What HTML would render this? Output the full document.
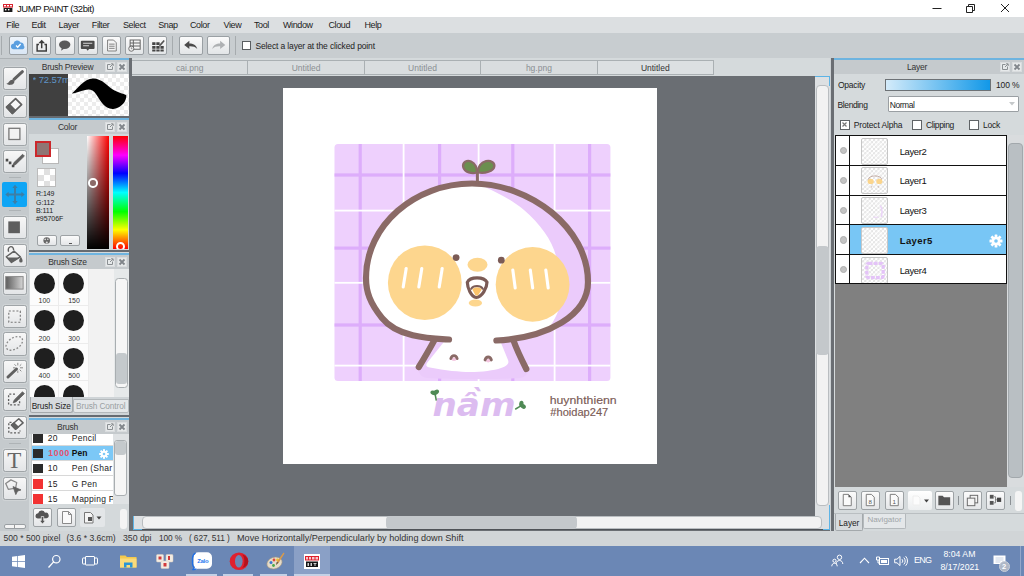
<!DOCTYPE html>
<html lang="en">
<head>
<meta charset="utf-8">
<title>JUMP PAINT (32bit)</title>
<style>
*{box-sizing:border-box;margin:0;padding:0}
html,body{width:1024px;height:576px;overflow:hidden;background:#c8cdd0;font-family:"Liberation Sans",sans-serif;font-size:9px;color:#2a2d30}
.a{position:absolute}
#titlebar{left:0;top:0;width:1024px;height:17px;background:#fff}
#menubar{left:0;top:17px;width:1024px;height:16px;background:#dcdfe1}
#menubar span{position:absolute;top:2.500px;font-size:9px;letter-spacing:-.4px;color:#222;white-space:nowrap}
#toolbar{left:0;top:33px;width:1024px;height:27px;background:#c8cdd0}
.tbtn{position:absolute;top:3px;width:20px;height:19px;border:1px solid #9aa0a4;border-radius:2px;background:linear-gradient(#fbfbfb,#e2e5e7)}
#toolcol{left:0;top:58px;width:29px;height:473px;background:#c5cacd}
.tool{position:absolute;left:3px;width:23.600px;height:23.200px;border:1px solid #9fa4a7;border-radius:2.500px;background:linear-gradient(#f7f7f7,#e3e5e7);box-shadow:0 0 0 1px #d0d4d6}
.tsep{position:absolute;left:9px;width:12px;height:1px;background:#aeb3b6}
#leftpanel{left:29px;top:58px;width:100px;height:473px;background:#d4d9db}
.phead{position:absolute;left:0;width:100%;height:14px;background:#c5cacd;text-align:center;font-size:8.500px;line-height:14px;color:#333;letter-spacing:-.25px}
.pblue{position:absolute;left:0;width:100%;height:2px;background:#6eb4e0}
.pbtn{position:absolute;width:10px;height:10px;background:#e6e9ea;border:1px solid #d9dcde}
.chk{background-color:#fff;background-image:linear-gradient(45deg,#ececec 25%,transparent 25%,transparent 75%,#ececec 75%),linear-gradient(45deg,#ececec 25%,transparent 25%,transparent 75%,#ececec 75%);background-size:8px 8px;background-position:0 0,4px 4px}
.chk2{background-color:#fff;background-image:linear-gradient(45deg,#e0e0e0 25%,transparent 25%,transparent 75%,#e0e0e0 75%),linear-gradient(45deg,#e0e0e0 25%,transparent 25%,transparent 75%,#e0e0e0 75%);background-size:12px 12px;background-position:0 0,6px 6px}
.chk3{background-color:#fff;background-image:linear-gradient(45deg,#e3e3e3 25%,transparent 25%,transparent 75%,#e3e3e3 75%),linear-gradient(45deg,#e3e3e3 25%,transparent 25%,transparent 75%,#e3e3e3 75%);background-size:4.400px 4.400px;background-position:0 0,2.200px 2.200px}
.sb{border:1px solid #9da2a5;border-radius:2px;background:linear-gradient(#fbfbfb,#e4e6e8)}
#center{left:129px;top:58px;width:705px;height:473px;background:#6a6e73}
#tabrow{left:3px;top:0;width:697.800px;height:18px;background:#d5dadc}
.tab{position:absolute;top:2px;height:15px;border:1px solid #aab0b3;border-left:none;background:#d9dddf;text-align:center;font-size:8.5px;line-height:14px;color:#8a8f93}
#canvas{left:153.600px;top:30px;width:374.900px;height:375.900px;background:#fff}
#rightpanel{left:834px;top:58px;width:190px;height:473px;background:#d5dadc}
#statusbar{left:0;top:531px;width:1024px;height:15px;background:#d1d5d7}
#statusbar span{position:absolute;top:2px;font-size:9px;color:#333;white-space:nowrap}
#taskbar{left:0;top:546px;width:1024px;height:30px;background:#6b87b5}
</style>
</head>
<body>
<div id="titlebar" class="a">
<svg class="a" style="left:3px;top:4px" width="10" height="8" viewBox="0 0 10 8"><rect x="0" y="0" width="10" height="8" fill="#fff"/><rect x="0" y="0" width="10" height="3.6" fill="#d8232f"/><rect x="1" y="1" width="2" height="1.4" fill="#fff"/><rect x="4" y="1" width="2" height="1.4" fill="#fff"/><rect x="7" y="1" width="2" height="1.4" fill="#fff"/><rect x="0.6" y="4" width="8.8" height="4" fill="#1a1a1a"/><rect x="2" y="5" width="1.4" height="1.4" fill="#fff"/><rect x="5" y="5" width="1.4" height="1.4" fill="#fff"/></svg>
<span class="a" style="left:17px;top:2px;font-size:9.500px;line-height:13px;color:#111;letter-spacing:-0.44px;white-space:nowrap">JUMP PAINT (32bit)</span>
<svg class="a" style="left:932px;top:3px" width="84" height="12" viewBox="0 0 84 12" fill="none" stroke="#222" stroke-width="1"><path d="M0.5 5.5h9"/><path d="M34.5 3.5h6v6h-6z"/><path d="M36.5 3.5v-2h6v6h-2"/><path d="M69 1l8 8M77 1l-8 8"/></svg>
</div>
<div id="menubar" class="a"><span style="left:6.3px">File</span><span style="left:31.6px">Edit</span><span style="left:58.6px">Layer</span><span style="left:91.8px">Filter</span><span style="left:123.0px">Select</span><span style="left:158.2px">Snap</span><span style="left:190.0px">Color</span><span style="left:223.5px">View</span><span style="left:254.0px">Tool</span><span style="left:283.0px">Window</span><span style="left:328.5px">Cloud</span><span style="left:364.5px">Help</span></div>
<div id="toolbar" class="a"><div class="a" style="left:1px;top:3px;width:1px;height:19px;background:#a6abae"></div><div class="tbtn" style="left:8.6px;width:19.4px;background:linear-gradient(#eef4fb,#d9e6f4)"><svg width="100%" height="100%" viewBox="0 0 19 17"><path d="M4.2 12.5a3 3 0 0 1-.3-6 4 4 0 0 1 7.6-1.2 3.2 3.2 0 0 1 3.6 3.4 2.2 2.2 0 0 1-1.2 3.8z" fill="#5b9fe0"/><path d="M6.6 8.6l1.8 1.8 3.2-3.6" fill="none" stroke="#fff" stroke-width="1.5"/></svg></div><div class="tbtn" style="left:32.0px;width:19.4px;"><svg width="100%" height="100%" viewBox="0 0 19 17"><path d="M6.5 7.5h-2v7h10v-7h-2" fill="none" stroke="#3c3c3c" stroke-width="1.6"/><path d="M9.5 11.5v-8" stroke="#3c3c3c" stroke-width="1.6"/><path d="M5.8 6l3.7-3.8 3.7 3.8z" fill="#3c3c3c"/></svg></div><div class="tbtn" style="left:55.2px;width:19.4px;"><svg width="100%" height="100%" viewBox="0 0 19 17"><ellipse cx="9.5" cy="7.6" rx="6.2" ry="4.6" fill="#5a5a5a"/><path d="M6.5 10.5l-1 3.6 4-2.6z" fill="#5a5a5a"/></svg></div><div class="tbtn" style="left:78.2px;width:19.4px;"><svg width="100%" height="100%" viewBox="0 0 19 17"><path d="M3 3.2h13a1 1 0 0 1 1 1v7a1 1 0 0 1-1 1h-5l-1.5 2-1.5-2H3a1 1 0 0 1-1-1v-7a1 1 0 0 1 1-1z" fill="#4a4a4a"/><path d="M4.5 6h10M4.5 8.8h6.5" stroke="#d8d8d8" stroke-width="1.2"/></svg></div><div class="tbtn" style="left:101.6px;width:19.4px;"><svg width="100%" height="100%" viewBox="0 0 19 17"><path d="M5 2.5h6.5l3 3v9h-9.500z" fill="#f4f4f4" stroke="#777" stroke-width="1"/><path d="M6.700 7h6M6.700 9.300h6M6.700 11.600h6" stroke="#777" stroke-width="1"/></svg></div><div class="tbtn" style="left:124.8px;width:19.4px;"><svg width="100%" height="100%" viewBox="0 0 19 17"><path d="M4.500 2.500h11v10h-11zM4.500 5.800h11M4.500 9.100h11M8 2.500v10" fill="#f4f4f4" stroke="#666" stroke-width="1.1"/><circle cx="5.800" cy="12" r="2.800" fill="#f4f4f4" stroke="#666" stroke-width="1"/><path d="M5.800 10.500v1.600h1.300" stroke="#666" stroke-width=".8" fill="none"/></svg></div><div class="tbtn" style="left:148.0px;width:19.4px;"><svg width="100%" height="100%" viewBox="0 0 19 17"><path d="M3.500 5h3.600v3h-3.600zM8 5h3.600v3h-3.600zM3.500 9h3.600v3h-3.600zM8 9h3.600v3h-3.600zM12.500 9h3.600v3h-3.600zM3.500 13h3.600v2h-3.600zM8 13h3.600v2h-3.600zM12.500 13h3.600v2h-3.600z" fill="#444"/><path d="M11.500 7.500l4.500-5 1.300 1.200-4.500 5-1.800.5z" fill="#555"/></svg></div><div class="a" style="left:172px;top:3px;width:1px;height:19px;background:#a6abae"></div><div class="tbtn" style="left:179px;width:23.500px"><svg width="100%" height="100%" viewBox="0 0 23 17"><path d="M4.500 8l5.500-4.500v2.800c4 0 7.500 1.500 8.500 6-2-2.600-4.800-3.200-8.500-3.100v3z" fill="#4a4a4a"/></svg></div><div class="tbtn" style="left:206.500px;width:23.500px"><svg width="100%" height="100%" viewBox="0 0 23 17"><path d="M18.500 8l-5.500-4.500v2.800c-4 0-7.500 1.500-8.500 6 2-2.600 4.800-3.200 8.500-3.100v3z" fill="#aeb1b3"/></svg></div><div class="a" style="left:235px;top:3px;width:1px;height:19px;background:#a6abae"></div><div class="a" style="left:241.800px;top:7.800px;width:9.600px;height:9.600px;background:#fff;border:1.300px solid #5a5e61"></div><span class="a" style="left:255.500px;top:8px;font-size:8.500px;line-height:11px;letter-spacing:-0.14px;color:#222;white-space:nowrap">Select a layer at the clicked point</span></div>
<div id="toolcol" class="a"><div id="tcline" class="a" style="left:0;top:0;width:29px;height:1px;background:#adb2b5"></div><div class="tool" style="top:8.6px"><svg class="a" style="left:-1px;top:-1px" width="24" height="24" viewBox="0 0 24 24"><path d="M19.400 4.700L11 12.300" stroke="#606060" stroke-width="3" stroke-linecap="round"/><path d="M3.300 16.800c1.200-.3 2-.9 2.700-2 1-1.600 2.600-2.300 4.200-1.900l1.300 1.500c-.2 1.600-1.500 3-3.400 3.400-1.800.4-3.500 0-4.800-1z" fill="#606060"/></svg></div><div class="tool" style="top:36.6px"><svg class="a" style="left:-1px;top:-1px" width="24" height="24" viewBox="0 0 24 24"><path d="M12.600 3.600l6 6-9.200 8.700-5.800-6.100z" fill="#f6f6f6" stroke="#606060" stroke-width="1.700" stroke-linejoin="round"/><path d="M3.600 12.200l5.800 6.100 3-2.800-5.900-6z" fill="#606060" stroke="#606060" stroke-width="1.700" stroke-linejoin="round"/></svg></div><div class="tool" style="top:64.7px"><svg class="a" style="left:-1px;top:-1px" width="24" height="24" viewBox="0 0 24 24"><rect x="5.900" y="5.300" width="11" height="11.200" fill="#f2f2f2" stroke="#777" stroke-width="1.300"/></svg></div><div class="tool" style="top:92.3px"><svg class="a" style="left:-1px;top:-1px" width="24" height="24" viewBox="0 0 24 24"><path d="M19.600 4.300l1.800 1.800-8.600 8.300-3 1.200 1.200-3z" fill="#606060" stroke="#606060" stroke-width=".8" stroke-linejoin="round"/><path d="M2.700 8.800h2.600v2.600h-2.600zM5.800 11.600h2.600v2.600h-2.600zM8.800 14.700h2.600v2.600h-2.600z" fill="#4a4a4a"/></svg></div><div class="a" style="left:2px;top:123.7px;width:25px;height:25.600px;background:#0fa5f5;border-radius:2px"><svg class="a" style="left:.5px;top:0" width="24" height="25" viewBox="0 0 24 25"><path d="M12 4.500v16M4 12.500h16" stroke="#3d7ea6" stroke-width="2"/><path d="M12 2.800l2.700 3.300h-5.400zM12 22.200l2.700-3.300h-5.400zM2.300 12.500l3.300-2.700v5.400zM21.700 12.500l-3.300-2.700v5.400z" fill="#3d7ea6"/></svg></div><div class="tool" style="top:157.6px"><svg class="a" style="left:-1px;top:-1px" width="24" height="24" viewBox="0 0 24 24"><rect x="5.300" y="5.400" width="11.600" height="11.800" fill="#5e5e5e"/></svg></div><div class="tool" style="top:185.5px"><svg class="a" style="left:-1px;top:-1px" width="24" height="24" viewBox="0 0 24 24"><path d="M5.600 7.800c-1-2.500.2-5 2.200-5.200 1.800-.1 2.900 1.500 2.800 3.600" fill="none" stroke="#606060" stroke-width="1.400"/><path d="M3.300 12.800l7.700-5.700 6.300 5.700-8.800 5.700z" fill="#eee" stroke="#606060" stroke-width="1.400" stroke-linejoin="round"/><path d="M4 13.500l12.500 0-8 5z" fill="#606060"/><path d="M17.900 12.500c1.100 2 1.700 3.300 1.700 4.400a1.700 1.700 0 0 1-3.400 0c0-1.100.6-2.400 1.700-4.400z" fill="#606060"/></svg></div><div class="tool" style="top:214.0px"><svg class="a" style="left:-1px;top:-1px" width="24" height="24" viewBox="0 0 24 24"><defs><linearGradient id="tg8" x1="0" x2="1" y1="0" y2="0"><stop offset="0" stop-color="#5c5c5c"/><stop offset="1" stop-color="#d6d6d6"/></linearGradient></defs><rect x="2.700" y="4.600" width="17.400" height="12.500" fill="url(#tg8)" stroke="#8a8a8a" stroke-width="1"/></svg></div><div class="tool" style="top:246.5px"><svg class="a" style="left:-1px;top:-1px" width="24" height="24" viewBox="0 0 24 24"><rect x="5.800" y="6" width="11.500" height="11.300" fill="none" stroke="#747474" stroke-width="1.100" stroke-dasharray="2 1.800"/></svg></div><div class="tool" style="top:274.4px"><svg class="a" style="left:-1px;top:-1px" width="24" height="24" viewBox="0 0 24 24"><ellipse cx="11.300" cy="11.400" rx="9.200" ry="5.600" transform="rotate(-33 11.300 11.400)" fill="none" stroke="#8a8a8a" stroke-width="1.300" stroke-dasharray="1.800 1.800"/></svg></div><div class="tool" style="top:302.2px"><svg class="a" style="left:-1px;top:-1px" width="24" height="24" viewBox="0 0 24 24"><path d="M5 17L13.500 9" stroke="#606060" stroke-width="3" stroke-linecap="round"/><path d="M14.800 2.800v2.600M14.800 10.500v2.400M10 7.800h2.600M17 7.800h3M11.500 4.300l1.600 1.600M18.300 4.300l-1.600 1.600M18.300 11.300l-1.600-1.600" stroke="#8a8a8a" stroke-width="1"/></svg></div><div class="tool" style="top:329.8px"><svg class="a" style="left:-1px;top:-1px" width="24" height="24" viewBox="0 0 24 24"><path d="M12 6.200h-6.400v10.600h11v-5.600" fill="none" stroke="#606060" stroke-width="1.300" stroke-dasharray="2 1.700"/><path d="M19.500 3.800l1.900 1.900-8.300 8-2.900 1.100 1.100-2.900z" fill="#606060" stroke="#606060" stroke-width=".8" stroke-linejoin="round"/></svg></div><div class="tool" style="top:357.6px"><svg class="a" style="left:-1px;top:-1px" width="24" height="24" viewBox="0 0 24 24"><path d="M8.500 6.300h-2.700v10.600h11.200v-2.500" fill="none" stroke="#606060" stroke-width="1.300" stroke-dasharray="2 1.700"/><path d="M15.800 2.800l4.300 4.100-7.500 6.300-4.100-4.200z" fill="#f6f6f6" stroke="#606060" stroke-width="1.500" stroke-linejoin="round"/><path d="M8.500 9l4.100 4.200 2.500-2.100-4.200-4.100z" fill="#606060" stroke="#606060" stroke-width="1.500" stroke-linejoin="round"/></svg></div><div class="tool" style="top:391.0px"><svg class="a" style="left:-1px;top:-1px" width="24" height="24" viewBox="0 0 24 24"><text x="11.400" y="18.600" text-anchor="middle" font-family="Liberation Serif,serif" font-size="23" fill="#666">T</text></svg></div><div class="tool" style="top:418.5px"><svg class="a" style="left:-1px;top:-1px" width="24" height="24" viewBox="0 0 24 24"><path d="M2.700 6.500l5.200-3.600 5.800 2.600-1.100 5.700-7.300 1.100z" fill="none" stroke="#8a8a8a" stroke-width="1.300" stroke-linejoin="round"/><path d="M10 9.600l8 3.300-3.400 1.200-1.800 3.500z" fill="#606060" stroke="#606060" stroke-width=".8" stroke-linejoin="round"/></svg></div><div class="tsep" style="top:119.3px"></div><div class="tsep" style="top:152.3px"></div><div class="tsep" style="top:241.0px"></div><div class="tsep" style="top:384.7px"></div><div class="a" style="left:3.500px;top:466px;width:22px;height:4.500px;background:#f4f4f4;border:1px solid #9a9fa3;border-radius:2px"></div><div class="a" style="left:14px;top:467px;width:1px;height:2.500px;background:#999"></div></div>
<div id="leftpanel" class="a"><div class="pblue" style="top:0.0px"></div><div class="phead" style="top:2.0px"><span style="position:relative;left:-11.500px">Brush Preview</span><div class="pbtn" style="left:76px;top:2px"><svg width="8" height="8" viewBox="0 0 8 8" style="position:absolute;left:0;top:0"><path d="M4.500 1.500h-3v5h5v-3" fill="none" stroke="#8a8f92" stroke-width="1"/><path d="M4 4l3-3M5 .8h2.200v2.200" fill="none" stroke="#8a8f92" stroke-width="1"/></svg></div><div class="pbtn" style="left:88px;top:2px"><svg width="8" height="8" viewBox="0 0 8 8" style="position:absolute;left:0;top:0"><path d="M1.500 1.500l5 5M6.500 1.500l-5 5" stroke="#80858a" stroke-width="1.800"/></svg></div></div><div class="a" style="left:0;top:16px;width:39px;height:41.500px;background:#404040"></div><div class="a chk" style="left:39px;top:16px;width:61px;height:41.500px"></div><span class="a" style="left:3.500px;top:16.300px;font-size:9.500px;line-height:11px;color:#5f95c8;white-space:nowrap;width:35.500px;overflow:hidden;letter-spacing:-.1px">* 72.57mm</span><svg class="a" style="left:39px;top:16px" width="61" height="42" viewBox="68 74 61 42"><path d="M71.800 93.600C77 89.500 84 78.600 93 78.600c9.500 0 15 8.500 21.500 12 5 2.500 8.500 3 11.800 4.600.4 5-3.700 12.300-13 13.700-8.300.6-13-8-17-14.300-3.800-6-8-5.400-12-4.400-4 1-8 2.700-12.500 3.400z" fill="#000"/></svg><div class="a" style="left:0;top:57.5px;width:100px;height:2px;background:#666b71"></div><div class="pblue" style="top:60.0px"></div><div class="phead" style="top:62.0px"><span style="position:relative;left:-11.500px">Color</span><div class="pbtn" style="left:76px;top:2px"><svg width="8" height="8" viewBox="0 0 8 8" style="position:absolute;left:0;top:0"><path d="M4.500 1.500h-3v5h5v-3" fill="none" stroke="#8a8f92" stroke-width="1"/><path d="M4 4l3-3M5 .8h2.200v2.200" fill="none" stroke="#8a8f92" stroke-width="1"/></svg></div><div class="pbtn" style="left:88px;top:2px"><svg width="8" height="8" viewBox="0 0 8 8" style="position:absolute;left:0;top:0"><path d="M1.500 1.500l5 5M6.500 1.500l-5 5" stroke="#80858a" stroke-width="1.800"/></svg></div></div><div class="a" style="left:13px;top:89.500px;width:16.500px;height:16.500px;background:#fff;border:1px solid #b8b8b8"></div><div class="a" style="left:6px;top:83px;width:16px;height:16px;background:#8f7574;border:2px solid #cc272b"></div><div class="a chk2" style="left:8px;top:110px;width:19px;height:19px;border:1px solid #bbb"></div><span class="a" style="left:7px;top:132.2px;font-size:7px;line-height:8px;color:#222;white-space:nowrap;letter-spacing:-.05px">R:149</span><span class="a" style="left:7px;top:140.5px;font-size:7px;line-height:8px;color:#222;white-space:nowrap;letter-spacing:-.05px">G:112</span><span class="a" style="left:7px;top:148.9px;font-size:7px;line-height:8px;color:#222;white-space:nowrap;letter-spacing:-.05px">B:111</span><span class="a" style="left:7px;top:157.2px;font-size:7px;line-height:8px;color:#222;white-space:nowrap;letter-spacing:-.05px">#95706F</span><div class="a sb" style="left:8.300px;top:177px;width:19.500px;height:11.300px"><svg width="17" height="9" viewBox="0 0 17 9" style="position:absolute;left:0;top:0"><circle cx="8.700" cy="4.500" r="3.300" fill="#666"/><circle cx="7.200" cy="3.400" r=".8" fill="#ddd"/><circle cx="9.800" cy="3.200" r=".8" fill="#ddd"/><circle cx="8.800" cy="6.600" r="1" fill="#ddd"/></svg></div><div class="a sb" style="left:31.300px;top:177px;width:19.500px;height:11.300px"><div class="a" style="left:7.500px;top:6.500px;width:3px;height:1px;background:#555"></div></div><div class="a" style="left:57.500px;top:78px;width:22.500px;height:112.500px;background:linear-gradient(to bottom,rgba(0,0,0,0),#000),linear-gradient(to right,#fff,#f00)"></div><div class="a" style="left:83.500px;top:78px;width:15px;height:112.500px;background:linear-gradient(to bottom,#f00 0%,#f0f 17%,#00f 33%,#0ff 50%,#0f0 67%,#ff0 83%,#f00 100%);overflow:hidden"><div class="a" style="left:3px;top:106px;width:9px;height:9px;border:2px solid #fff;border-radius:50%"></div></div><div class="a" style="left:59px;top:120px;width:9.500px;height:9.500px;border:2px solid #fff;border-radius:50%;background:#8c6a68"></div><div class="a" style="left:0;top:192.4px;width:100px;height:2px;background:#666b71"></div><div class="pblue" style="top:194.5px"></div><div class="phead" style="top:196.5px"><span style="position:relative;left:-11.500px">Brush Size</span><div class="pbtn" style="left:76px;top:2px"><svg width="8" height="8" viewBox="0 0 8 8" style="position:absolute;left:0;top:0"><path d="M4.500 1.500h-3v5h5v-3" fill="none" stroke="#8a8f92" stroke-width="1"/><path d="M4 4l3-3M5 .8h2.200v2.200" fill="none" stroke="#8a8f92" stroke-width="1"/></svg></div><div class="pbtn" style="left:88px;top:2px"><svg width="8" height="8" viewBox="0 0 8 8" style="position:absolute;left:0;top:0"><path d="M1.500 1.500l5 5M6.500 1.500l-5 5" stroke="#80858a" stroke-width="1.800"/></svg></div></div><div class="a" style="left:.5px;top:210.8px;width:84.500px;height:128.200px;background:#f2f2f2;overflow:hidden"><div class="a" style="left:0.0px;top:0.0px;width:29.700px;height:37.500px;background:#fcfcfc;border-right:1px solid #ececec;border-bottom:1px solid #ececec"><div class="a" style="left:4.300px;top:4.200px;width:21px;height:21px;border-radius:50%;background:#1f1f1f"></div><span class="a" style="left:0;top:28.500px;width:29.700px;text-align:center;font-size:7px;line-height:8px;color:#333">100</span></div><div class="a" style="left:29.7px;top:0.0px;width:29.700px;height:37.500px;background:#fcfcfc;border-right:1px solid #ececec;border-bottom:1px solid #ececec"><div class="a" style="left:4.300px;top:4.200px;width:21px;height:21px;border-radius:50%;background:#1f1f1f"></div><span class="a" style="left:0;top:28.500px;width:29.700px;text-align:center;font-size:7px;line-height:8px;color:#333">150</span></div><div class="a" style="left:0.0px;top:37.5px;width:29.700px;height:37.500px;background:#fcfcfc;border-right:1px solid #ececec;border-bottom:1px solid #ececec"><div class="a" style="left:4.300px;top:4.200px;width:21px;height:21px;border-radius:50%;background:#1f1f1f"></div><span class="a" style="left:0;top:28.500px;width:29.700px;text-align:center;font-size:7px;line-height:8px;color:#333">200</span></div><div class="a" style="left:29.7px;top:37.5px;width:29.700px;height:37.500px;background:#fcfcfc;border-right:1px solid #ececec;border-bottom:1px solid #ececec"><div class="a" style="left:4.300px;top:4.200px;width:21px;height:21px;border-radius:50%;background:#1f1f1f"></div><span class="a" style="left:0;top:28.500px;width:29.700px;text-align:center;font-size:7px;line-height:8px;color:#333">300</span></div><div class="a" style="left:0.0px;top:75.0px;width:29.700px;height:37.500px;background:#fcfcfc;border-right:1px solid #ececec;border-bottom:1px solid #ececec"><div class="a" style="left:4.300px;top:4.200px;width:21px;height:21px;border-radius:50%;background:#1f1f1f"></div><span class="a" style="left:0;top:28.500px;width:29.700px;text-align:center;font-size:7px;line-height:8px;color:#333">400</span></div><div class="a" style="left:29.7px;top:75.0px;width:29.700px;height:37.500px;background:#fcfcfc;border-right:1px solid #ececec;border-bottom:1px solid #ececec"><div class="a" style="left:4.300px;top:4.200px;width:21px;height:21px;border-radius:50%;background:#1f1f1f"></div><span class="a" style="left:0;top:28.500px;width:29.700px;text-align:center;font-size:7px;line-height:8px;color:#333">500</span></div><div class="a" style="left:0.0px;top:112.5px;width:29.700px;height:37.500px;background:#fcfcfc;border-right:1px solid #ececec;border-bottom:1px solid #ececec"><div class="a" style="left:4.300px;top:4.200px;width:21px;height:21px;border-radius:50%;background:#1f1f1f"></div><span class="a" style="left:0;top:28.500px;width:29.700px;text-align:center;font-size:7px;line-height:8px;color:#333"></span></div><div class="a" style="left:29.7px;top:112.5px;width:29.700px;height:37.500px;background:#fcfcfc;border-right:1px solid #ececec;border-bottom:1px solid #ececec"><div class="a" style="left:4.300px;top:4.200px;width:21px;height:21px;border-radius:50%;background:#1f1f1f"></div><span class="a" style="left:0;top:28.500px;width:29.700px;text-align:center;font-size:7px;line-height:8px;color:#333"></span></div></div><div class="a" style="left:85px;top:210.8px;width:15px;height:128.200px;background:#e6e9ea"></div><div class="a" style="left:85.500px;top:220px;width:13.500px;height:110px;background:#f6f6f6;border:1px solid #a9aeb1;border-radius:3.500px"></div><div class="a" style="left:86.500px;top:295px;width:11.500px;height:31px;background:#c4c9cc;border-radius:3px"></div><div class="a" style="left:0;top:339px;width:100px;height:18px;background:#cfd4d7"></div><div class="a" style="left:44px;top:340.500px;width:55.500px;height:14px;background:#e4e7e9;border:1px solid #b4b9bc;border-radius:0 0 2px 2px;font-size:8.300px;line-height:12px;color:#9a9fa2;text-align:center;white-space:nowrap;overflow:hidden;letter-spacing:-.1px">Brush Control</div><div class="a" style="left:.7px;top:339px;width:43px;height:16px;background:#d6dadd;border:1px solid #a4a9ac;border-top:none;border-radius:0 0 2.500px 2.500px;font-size:8.300px;line-height:19px;color:#222;text-align:center;white-space:nowrap;overflow:hidden;letter-spacing:-.1px">Brush Size</div><div class="a" style="left:0;top:357.2px;width:100px;height:2px;background:#666b71"></div><div class="pblue" style="top:360.0px"></div><div class="phead" style="top:362.0px"><span style="position:relative;left:-11.500px">Brush</span><div class="pbtn" style="left:76px;top:2px"><svg width="8" height="8" viewBox="0 0 8 8" style="position:absolute;left:0;top:0"><path d="M4.500 1.500h-3v5h5v-3" fill="none" stroke="#8a8f92" stroke-width="1"/><path d="M4 4l3-3M5 .8h2.200v2.200" fill="none" stroke="#8a8f92" stroke-width="1"/></svg></div><div class="pbtn" style="left:88px;top:2px"><svg width="8" height="8" viewBox="0 0 8 8" style="position:absolute;left:0;top:0"><path d="M1.500 1.500l5 5M6.500 1.500l-5 5" stroke="#80858a" stroke-width="1.800"/></svg></div></div><div class="a" style="left:2.300px;top:376.4px;width:81.500px;height:69.600px;background:#fff;overflow:hidden;border-left:1px solid #c4c8ca"><div class="a" style="left:0;top:-3.9px;width:84px;height:15.200px;background:#fff;border-bottom:1px solid #d8d8d8"><div class="a" style="left:1px;top:3px;width:9.600px;height:9.600px;background:#2b2b2b"></div><span class="a" style="left:15.500px;top:2.500px;font-size:8.500px;line-height:11px;color:#222;letter-spacing:.2px">20</span><span class="a" style="left:39.500px;top:2.500px;font-size:8.500px;line-height:11px;color:#222;white-space:nowrap;letter-spacing:.25px">Pencil</span></div><div class="a" style="left:0;top:11.3px;width:84px;height:15.200px;background:#7cc8f6;border-bottom:1px solid #d8d8d8"><div class="a" style="left:1px;top:3px;width:9.600px;height:9.600px;background:#2b2b2b"></div><span class="a" style="left:16px;top:2.500px;font-size:8.500px;line-height:11px;color:#e6506a;letter-spacing:.7px;font-weight:bold">1000</span><span class="a" style="left:39.500px;top:2.500px;font-size:8.500px;line-height:11px;color:#111;font-weight:bold">Pen</span><svg class="a" style="left:67px;top:3px" width="10" height="10" viewBox="-5 -5 10 10"><g fill="#fff"><circle r="3.200"/><g id="gt"><rect x="-1" y="-4.800" width="2" height="9.600"/><rect x="-4.800" y="-1" width="9.600" height="2"/></g><use href="#gt" transform="rotate(45)"/></g><circle r="1.300" fill="#7cc8f6"/></svg></div><div class="a" style="left:0;top:26.5px;width:84px;height:15.200px;background:#fff;border-bottom:1px solid #d8d8d8"><div class="a" style="left:1px;top:3px;width:9.600px;height:9.600px;background:#2b2b2b"></div><span class="a" style="left:15.500px;top:2.500px;font-size:8.500px;line-height:11px;color:#222;letter-spacing:.2px">10</span><span class="a" style="left:39.500px;top:2.500px;font-size:8.500px;line-height:11px;color:#222;white-space:nowrap;letter-spacing:.25px">Pen (Shar</span></div><div class="a" style="left:0;top:41.7px;width:84px;height:15.200px;background:#fff;border-bottom:1px solid #d8d8d8"><div class="a" style="left:1px;top:3px;width:9.600px;height:9.600px;background:#f23232"></div><span class="a" style="left:15.500px;top:2.500px;font-size:8.500px;line-height:11px;color:#222;letter-spacing:.2px">15</span><span class="a" style="left:39.500px;top:2.500px;font-size:8.500px;line-height:11px;color:#222;white-space:nowrap;letter-spacing:.25px">G Pen</span></div><div class="a" style="left:0;top:56.9px;width:84px;height:15.200px;background:#fff;border-bottom:1px solid #d8d8d8"><div class="a" style="left:1px;top:3px;width:9.600px;height:9.600px;background:#f23232"></div><span class="a" style="left:15.500px;top:2.500px;font-size:8.500px;line-height:11px;color:#222;letter-spacing:.2px">15</span><span class="a" style="left:39.500px;top:2.500px;font-size:8.500px;line-height:11px;color:#222;white-space:nowrap;letter-spacing:.25px">Mapping P</span></div></div><div class="a" style="left:83.800px;top:376.4px;width:16.200px;height:69.600px;background:#dfe2e4"></div><div class="a" style="left:84.500px;top:382px;width:13.200px;height:56px;background:#f6f6f6;border:1px solid #a9aeb1;border-radius:3px"></div><div class="a" style="left:85.500px;top:383px;width:11.200px;height:14px;background:#c4c9cc;border-radius:3px"></div><div class="a sb" style="left:4.300px;top:449.500px;width:19px;height:19px"><svg width="17" height="17" viewBox="0 0 17 17" style="position:absolute;left:0;top:0"><path d="M4 9.500a2.600 2.600 0 0 1 .2-5.200 3.600 3.600 0 0 1 6.800-.6 2.900 2.900 0 0 1 1.600 5.600z" fill="#555"/><path d="M7.300 7.500h2.400v4h1.800l-3 3.500-3-3.500h1.800z" fill="#555" stroke="#f0f0f0" stroke-width=".7"/></svg></div><div class="a sb" style="left:27.800px;top:449.500px;width:19px;height:19px"><svg width="17" height="17" viewBox="0 0 17 17" style="position:absolute;left:0;top:0"><path d="M4.500 2.500h6l3 3v9h-9z" fill="#fafafa" stroke="#8a8a8a" stroke-width="1"/><path d="M10.500 2.500v3h3" fill="none" stroke="#8a8a8a" stroke-width="1"/></svg></div><div class="a" style="left:51px;top:449.500px;width:25px;height:19px;background:#e3e6e8;border-radius:2px"><svg width="25" height="19" viewBox="0 0 25 19" style="position:absolute;left:0;top:0"><path d="M4.500 4.500h6l2.500 2.500v8h-8.500z" fill="#f4f4f4" stroke="#777" stroke-width="1"/><rect x="8" y="9" width="4" height="4" fill="#555"/><path d="M16.500 8.500h5l-2.500 3z" fill="#444"/></svg></div><div class="a" style="left:90.500px;top:451px;width:7px;height:20px;background:#f4f4f4;border-radius:3px"></div></div>
<div id="center" class="a"><div id="tabrow" class="a"><div class="tab" style="left:0.0px;width:116.400px;">cai.png</div><div class="tab" style="left:116.4px;width:116.400px;">Untitled</div><div class="tab" style="left:232.8px;width:116.400px;">Untitled</div><div class="tab" style="left:349.2px;width:116.400px;">hg.png</div><div class="tab" style="left:465.6px;width:116.400px;color:#333;background:#dce0e2;">Untitled</div></div><div id="canvas" class="a"><svg id="art" class="a" style="left:.4px;top:0" width="374" height="375" viewBox="283 88 374 375"><defs><clipPath id="gc"><rect x="334.500" y="143.900" width="275.900" height="237.200" rx="3.500"/></clipPath></defs><g clip-path="url(#gc)"><rect x="334" y="144" width="277" height="238" fill="#eed0fd"/><rect x="358.6" y="144" width="3.200" height="238" fill="#ddadfb"/><rect x="438.0" y="144" width="3.200" height="238" fill="#ddadfb"/><rect x="511.2" y="144" width="3.200" height="238" fill="#ddadfb"/><rect x="588.0" y="144" width="3.200" height="238" fill="#ddadfb"/><rect x="334" y="173.4" width="277" height="3.200" fill="#ddadfb"/><rect x="334" y="246.5" width="277" height="3.200" fill="#ddadfb"/><rect x="334" y="323.4" width="277" height="3.200" fill="#ddadfb"/><rect x="402.7" y="144" width="1.800" height="238" fill="#fff"/><rect x="477.7" y="144" width="1.800" height="238" fill="#fff"/><rect x="553.7" y="144" width="1.800" height="238" fill="#fff"/><rect x="334" y="209.7" width="277" height="1.800" fill="#fff"/><rect x="334" y="281.9" width="277" height="1.800" fill="#fff"/><rect x="334" y="364.7" width="277" height="1.800" fill="#fff"/></g><path d="M449 339.500C432 338.500 398 338 382 318C370 303 366 292 366 278C366 225 415 183.500 472 183.500C530 183.500 588 228 588 282C588 315 548 338 496.400 340.500z" fill="#ebcbfb"/><path d="M436 338L419.500 367C417.500 372 420 377 427 378C450 379.500 500 379.500 520 378C526 377 529 373 527.500 369L512 338z" fill="#ebcbfb"/><path d="M449 339.500C432 338.500 398 338 382 318C370 303 366 292 366 278C366 225 415 183.500 472 183.500C478 183.500 482 185 487 188C500 194 512 200 524 210C540 224 552 240 556 256C562 280 564 300 557 314C554 320 552 324 549 327C535 334 515 339.500 496.400 340.500z" fill="#fff"/><path d="M447 338L427 363C425.500 365.500 426.500 367 430 367.500C445 370.500 460 372 470 372C482 372 494 370.500 501 368C507 366 509.500 363.500 508 360L499 338z" fill="#fff"/><ellipse cx="424.800" cy="282.700" rx="36.900" ry="37.300" fill="#fdd68e"/><ellipse cx="532.600" cy="284.400" rx="36.900" ry="37.300" fill="#fdd68e"/><path d="M406.2 268.500L403.2 287" stroke="#fff" stroke-width="3.100" stroke-linecap="round"/><path d="M421.8 268.500L418.8 287" stroke="#fff" stroke-width="3.100" stroke-linecap="round"/><path d="M442.2 268.500L439.2 287" stroke="#fff" stroke-width="3.100" stroke-linecap="round"/><path d="M512.8 270L515.2 288" stroke="#fff" stroke-width="3.100" stroke-linecap="round"/><path d="M530.3 270L532.7 288" stroke="#fff" stroke-width="3.100" stroke-linecap="round"/><path d="M545.8 270L548.2 288" stroke="#fff" stroke-width="3.100" stroke-linecap="round"/><ellipse cx="477.500" cy="264.800" rx="10" ry="7" fill="#fdd68e"/><ellipse cx="475.400" cy="303" rx="6.700" ry="3.500" fill="#fdd68e"/><circle cx="456.100" cy="257.600" r="3.400" fill="#7b5b56"/><circle cx="501.300" cy="260.200" r="3.400" fill="#7b5b56"/><path d="M467.300 282.300C470 276.300 484 276.300 487 282.300C487 288 482 297 476.300 297.500C471 297 467.500 288 467.300 282.300z" fill="#fff" stroke="#7b5b56" stroke-width="3.200" stroke-linejoin="round"/><path d="M472.300 289.500C474.500 286.500 479.500 286.500 481.800 289.500L478 295.500L475.500 295.500z" fill="#fbc36a"/><path d="M471.200 288.800C473.500 285 480.500 285 482.800 288.800" fill="none" stroke="#7b5b56" stroke-width="2" stroke-linecap="round"/><ellipse cx="454.0" cy="359.2" rx="2.600" ry="1.800" fill="#f3c6e0"/><path d="M450.8 358.6C452.0 354.6 456.0 354.6 457.2 358.6" fill="none" stroke="#8a6a66" stroke-width="2.800" stroke-linecap="round"/><ellipse cx="488.2" cy="360.6" rx="2.600" ry="1.800" fill="#f3c6e0"/><path d="M485.0 360.0C486.2 356.0 490.2 356.0 491.4 360.0" fill="none" stroke="#8a6a66" stroke-width="2.800" stroke-linecap="round"/><path d="M449 339.500C432 338.500 398 338 382 318C370 303 366 292 366 278C366 225 415 183.500 472 183.500C530 183.500 588 228 588 282C588 315 548 338 496.400 340.500" fill="none" stroke="#8a6a66" stroke-width="6.200" stroke-linecap="round" stroke-linejoin="round"/><path d="M434.500 340C429 350 423.500 359.500 418.800 367" fill="none" stroke="#8a6a66" stroke-width="6.200" stroke-linecap="round"/><path d="M513.300 340C517 350.500 522 360.500 526.300 369" fill="none" stroke="#8a6a66" stroke-width="6.200" stroke-linecap="round"/><path d="M477.400 183V171" stroke="#8a6a66" stroke-width="3" stroke-linecap="round"/><path d="M477 172.500C472 174 464.500 172.500 463.200 167C462.200 162 467 159.800 471 161.500C475 163.200 477.500 168 477 172.500z" fill="#6b8f4f" stroke="#8a6a66" stroke-width="2.300" stroke-linejoin="round"/><path d="M478 172.500C477.500 167 481 162.500 486 161.200C490.500 160.200 495 162.500 494.300 166.500C493.500 171 485 174 478 172.500z" fill="#6b8f4f" stroke="#8a6a66" stroke-width="2.300" stroke-linejoin="round"/><text x="432.500" y="416" font-family="DejaVu Sans,Liberation Sans,sans-serif" font-style="italic" font-weight="bold" font-size="32" fill="#dcbcf0" textLength="83" lengthAdjust="spacingAndGlyphs">nầm</text><g transform="translate(435.2 395.5) rotate(0)"><ellipse cx="-2.800" cy="-1.600" rx="3" ry="2.200" transform="rotate(25)" fill="#4f8a55"/><ellipse cx="2.800" cy="-2.200" rx="3" ry="2.200" transform="rotate(-35)" fill="#4f8a55"/><path d="M0 -1L1 4.500" stroke="#4f8a55" stroke-width="1.500" stroke-linecap="round"/></g><g transform="translate(519.5 406.5) rotate(70)"><ellipse cx="-2.800" cy="-1.600" rx="3" ry="2.200" transform="rotate(25)" fill="#4f8a55"/><ellipse cx="2.800" cy="-2.200" rx="3" ry="2.200" transform="rotate(-35)" fill="#4f8a55"/><path d="M0 -1L1 4.500" stroke="#4f8a55" stroke-width="1.500" stroke-linecap="round"/></g><text x="549.700" y="403.500" font-family="Liberation Sans,sans-serif" font-size="10.500" fill="#7b5b56" stroke="#7b5b56" stroke-width=".15" textLength="67" lengthAdjust="spacingAndGlyphs">huynhthienn</text><text x="550.300" y="416.300" font-family="Liberation Sans,sans-serif" font-size="10" fill="#7b5b56" stroke="#7b5b56" stroke-width=".15" textLength="58" lengthAdjust="spacingAndGlyphs">#hoidap247</text></svg></div><!--/canvas--><div class="a" style="left:700.800px;top:0;width:1.500px;height:473px;background:#ccd1d4"></div><div class="a" style="left:686px;top:18px;width:14.800px;height:453.500px;background:#dde0e2"></div><div class="a" style="left:686px;top:18px;width:14.800px;height:10px;border-top:1.300px solid #5db4e6;border-right:1.400px solid #5db4e6"></div><div class="a" style="left:692px;top:447px;width:8.800px;height:24.800px;border-bottom:1.300px solid #5db4e6;border-right:1.400px solid #5db4e6"></div><div class="a" style="left:686.500px;top:27px;width:13.500px;height:421px;background:#f2f2f2;border-radius:4px;border:1px solid #b9bdc0"></div><div class="a" style="left:686.500px;top:187.500px;width:13px;height:109px;background:#c4c8cb;border-radius:4px"></div><div class="a" style="left:4px;top:457.500px;width:690px;height:14.300px;background:#dde0e2;border-bottom:1.300px solid #4f5357"></div><div class="a" style="left:4px;top:457.500px;width:9px;height:14.300px;border-left:1.300px solid #5db4e6;border-bottom:1.300px solid #5db4e6"></div><div class="a" style="left:12.500px;top:457.500px;width:680.500px;height:13.800px;background:#f2f2f2;border-radius:4px;border:1px solid #b9bdc0"></div><div class="a" style="left:256.800px;top:458px;width:191px;height:13px;background:#c4c8cb;border-radius:4px"></div></div>
<div id="rightpanel" class="a"><div class="pblue" style="top:0"></div><div class="phead" style="top:2px"><span style="position:relative;left:-12px">Layer</span><div class="pbtn" style="left:166px;top:2px"><svg width="8" height="8" viewBox="0 0 8 8" style="position:absolute;left:0;top:0"><path d="M4.500 1.500h-3v5h5v-3" fill="none" stroke="#8a8f92" stroke-width="1"/><path d="M4 4l3-3M5 .8h2.200v2.200" fill="none" stroke="#8a8f92" stroke-width="1"/></svg></div><div class="pbtn" style="left:178px;top:2px"><svg width="8" height="8" viewBox="0 0 8 8" style="position:absolute;left:0;top:0"><path d="M1.500 1.500l5 5M6.500 1.500l-5 5" stroke="#80858a" stroke-width="1.800"/></svg></div></div><span class="a" style="left:4.0px;top:22.0px;font-size:8.500px;line-height:11px;color:#222;white-space:nowrap;letter-spacing:-0.25px;">Opacity</span><div class="a" style="left:51.0px;top:21.0px;width:106px;height:12px;border:1px solid #6d7276;background:linear-gradient(to right,#d4ebfa,#1198e8)"></div><span class="a" style="left:162.0px;top:22.0px;font-size:8.500px;line-height:11px;color:#222;white-space:nowrap;letter-spacing:-0.15px;">100 %</span><span class="a" style="left:3.6px;top:41.5px;font-size:8.500px;line-height:11px;color:#222;white-space:nowrap;letter-spacing:-0.40px;">Blending</span><div class="a" style="left:53.5px;top:37.5px;width:131px;height:16.500px;border:1px solid #9a9fa3;background:#fff;border-radius:1px"></div><span class="a" style="left:55.7px;top:41.5px;font-size:8.500px;line-height:11px;color:#222;white-space:nowrap;letter-spacing:-0.45px;">Normal</span><svg class="a" style="left:175.0px;top:44.0px" width="6" height="4" viewBox="0 0 6 4"><path d="M0 0h6l-3 3.500z" fill="#c5c8ca"/></svg><div class="a" style="left:6.2px;top:62.2px;width:9.600px;height:9.600px;border:1.300px solid #5f6366;background:#fff"><svg width="7" height="7" viewBox="0 0 7 7" style="position:absolute;left:0;top:0"><path d="M1.500 1.500l4 4M5.500 1.500l-4 4" stroke="#777" stroke-width="1.200"/></svg></div><span class="a" style="left:19.8px;top:61.7px;font-size:8.500px;line-height:11px;color:#222;white-space:nowrap;letter-spacing:-0.15px;">Protect Alpha</span><div class="a" style="left:78.4px;top:62.2px;width:9.600px;height:9.600px;border:1.300px solid #5f6366;background:#fff"></div><span class="a" style="left:92.0px;top:61.7px;font-size:8.500px;line-height:11px;color:#222;white-space:nowrap;letter-spacing:-0.35px;">Clipping</span><div class="a" style="left:135.0px;top:62.2px;width:9.600px;height:9.600px;border:1.300px solid #5f6366;background:#fff"></div><span class="a" style="left:149.0px;top:61.7px;font-size:8.500px;line-height:11px;color:#222;white-space:nowrap;letter-spacing:-0.20px;">Lock</span><div class="a" style="left:1px;top:77px;width:172px;height:352px;background:#808080"></div><div class="a" style="left:1px;top:77px;width:172px;height:149.300px;background:#fff;border:1px solid #111;overflow:hidden"><div class="a" style="left:-1px;top:-1.0px;width:173px;height:31px;border-top:1px solid #111"><div class="a" style="left:14.300px;top:0;width:1px;height:30px;background:#111"></div><div class="a" style="left:5px;top:11px;width:7.200px;height:7.200px;border-radius:50%;background:#c4c4c4;border:1px solid #aeaeae"></div><div class="a chk3" style="left:25.600px;top:1.500px;width:27.500px;height:27px;border:1px solid #c6c6c6;border-radius:2px"><svg width="26" height="25" viewBox="0 0 27 26" style="position:absolute;left:0;top:0"></svg></div><span class="a" style="left:64.700px;top:9.500px;font-size:9.500px;line-height:12px;color:#111;letter-spacing:-.4px">Layer2</span></div><div class="a" style="left:-1px;top:28.8px;width:173px;height:31px;border-top:1px solid #111"><div class="a" style="left:14.300px;top:0;width:1px;height:30px;background:#111"></div><div class="a" style="left:5px;top:11px;width:7.200px;height:7.200px;border-radius:50%;background:#c4c4c4;border:1px solid #aeaeae"></div><div class="a chk3" style="left:25.600px;top:1.500px;width:27.500px;height:27px;border:1px solid #c6c6c6;border-radius:2px"><svg width="26" height="25" viewBox="0 0 27 26" style="position:absolute;left:0;top:0"><ellipse cx="9" cy="14" rx="3.200" ry="2.700" fill="#fbd58c"/><ellipse cx="18" cy="14" rx="3.200" ry="2.700" fill="#fbd58c"/><path d="M6.500 12c.5-5 13.500-5 14 0" fill="none" stroke="#b79a90" stroke-width=".8"/><path d="M10.500 18.500l-1 2M16.500 18.500l1 2" stroke="#b79a90" stroke-width=".7"/></svg></div><span class="a" style="left:64.700px;top:9.500px;font-size:9.500px;line-height:12px;color:#111;letter-spacing:-.4px">Layer1</span></div><div class="a" style="left:-1px;top:58.6px;width:173px;height:31px;border-top:1px solid #111"><div class="a" style="left:14.300px;top:0;width:1px;height:30px;background:#111"></div><div class="a" style="left:5px;top:11px;width:7.200px;height:7.200px;border-radius:50%;background:#c4c4c4;border:1px solid #aeaeae"></div><div class="a chk3" style="left:25.600px;top:1.500px;width:27.500px;height:27px;border:1px solid #c6c6c6;border-radius:2px"><svg width="26" height="25" viewBox="0 0 27 26" style="position:absolute;left:0;top:0"><path d="M19 8c2 3 2 8 1 12" fill="none" stroke="#ead2f8" stroke-width="1.500"/><path d="M12 20h5" stroke="#ead2f8" stroke-width="1"/></svg></div><span class="a" style="left:64.700px;top:9.500px;font-size:9.500px;line-height:12px;color:#111;letter-spacing:-.4px">Layer3</span></div><div class="a" style="left:-1px;top:88.4px;width:173px;height:31px;border-top:1px solid #111"><div class="a" style="left:15px;top:0;width:157px;height:29.500px;background:#78c6f5"></div><div class="a" style="left:14.300px;top:0;width:1px;height:30px;background:#111"></div><div class="a" style="left:5px;top:11px;width:7.200px;height:7.200px;border-radius:50%;background:#c4c4c4;border:1px solid #aeaeae"></div><div class="a chk3" style="left:25.600px;top:1.500px;width:27.500px;height:27px;border:1px solid #c6c6c6;border-radius:2px"><svg width="26" height="25" viewBox="0 0 27 26" style="position:absolute;left:0;top:0"></svg></div><span class="a" style="left:64.700px;top:9.500px;font-size:9.500px;line-height:12px;color:#111;font-weight:bold;letter-spacing:.4px">Layer5</span><svg class="a" style="left:153.500px;top:8.500px" width="14" height="14" viewBox="-7 -7 14 14"><g fill="#fff"><circle r="4.300"/><g id="gr"><rect x="-1.400" y="-6.500" width="2.800" height="13" rx=".5"/><rect x="-6.500" y="-1.400" width="13" height="2.800" rx=".5"/></g><use href="#gr" transform="rotate(45)"/></g><circle r="1.800" fill="#78c6f5"/></svg></div><div class="a" style="left:-1px;top:118.2px;width:173px;height:31px;border-top:1px solid #111"><div class="a" style="left:14.300px;top:0;width:1px;height:30px;background:#111"></div><div class="a" style="left:5px;top:11px;width:7.200px;height:7.200px;border-radius:50%;background:#c4c4c4;border:1px solid #aeaeae"></div><div class="a chk3" style="left:25.600px;top:1.500px;width:27.500px;height:27px;border:1px solid #c6c6c6;border-radius:2px"><svg width="26" height="25" viewBox="0 0 27 26" style="position:absolute;left:0;top:0"><rect x="5" y="5.500" width="17" height="15" rx="2" fill="none" stroke="#e4c3f8" stroke-width="3.400" stroke-dasharray="4 1.200"/></svg></div><span class="a" style="left:64.700px;top:9.500px;font-size:9.500px;line-height:12px;color:#111;letter-spacing:-.4px">Layer4</span></div></div><div class="a" style="left:173px;top:77px;width:17px;height:352px;background:#d9dcde"></div><div class="a" style="left:174.200px;top:85px;width:14.500px;height:335px;background:#b9bfc3;border-radius:4px;border:1px solid #a2a8ac"></div><div class="a sb" style="left:4.3px;top:432.8px;width:19px;height:19px"><svg width="17" height="17" viewBox="1 1 18 18" style="position:absolute;left:0;top:0"><path d="M5.500 3.500h5.500l3 3v9h-8.500z" fill="#fafafa" stroke="#777" stroke-width="1"/><path d="M11 3.500l3 3h-3z" fill="#555"/></svg></div><div class="a sb" style="left:27.2px;top:432.8px;width:19px;height:19px"><svg width="17" height="17" viewBox="1 1 18 18" style="position:absolute;left:0;top:0"><path d="M5.500 3.500h5.500l3 3v9h-8.500z" fill="#fafafa" stroke="#777" stroke-width="1"/><text x="9.700" y="13.500" font-size="6.500" text-anchor="middle" fill="#555" font-family="Liberation Sans,sans-serif">8</text></svg></div><div class="a sb" style="left:50.5px;top:432.8px;width:19px;height:19px"><svg width="17" height="17" viewBox="1 1 18 18" style="position:absolute;left:0;top:0"><path d="M5.500 3.500h5.500l3 3v9h-8.500z" fill="#fafafa" stroke="#777" stroke-width="1"/><text x="9.700" y="13.500" font-size="6.500" text-anchor="middle" fill="#555" font-family="Liberation Sans,sans-serif">1</text></svg></div><div class="a" style="left:73.5px;top:432.8px;width:24px;height:19px;background:linear-gradient(#fff,#eceeef);border-radius:2px"><svg width="24" height="19" viewBox="0 0 24 19" style="position:absolute;left:0;top:0"><path d="M16 8.500h5l-2.500 3z" fill="#444"/><path d="M5 5h5l2 2v7h-7z" fill="#fcfcfc" stroke="#eee" stroke-width="1"/></svg></div><div class="a sb" style="left:100.6px;top:432.8px;width:19px;height:19px"><svg width="17" height="17" viewBox="1 1 18 18" style="position:absolute;left:0;top:0"><path d="M3.500 5h4.500l1.500 1.500h6.500v8.500h-12.500z" fill="#555"/></svg></div><div class="a sb" style="left:129.0px;top:432.8px;width:19px;height:19px"><svg width="17" height="17" viewBox="1 1 18 18" style="position:absolute;left:0;top:0"><rect x="7.500" y="4.500" width="8" height="8" fill="#f4f4f4" stroke="#666" stroke-width="1"/><rect x="4.500" y="7.500" width="8" height="8" fill="#f4f4f4" stroke="#666" stroke-width="1"/></svg></div><div class="a sb" style="left:152.0px;top:432.8px;width:19px;height:19px"><svg width="17" height="17" viewBox="1 1 18 18" style="position:absolute;left:0;top:0"><rect x="4" y="4" width="4" height="4" fill="#555"/><rect x="4" y="10.500" width="4" height="4" fill="#555"/><rect x="11.500" y="7" width="4.500" height="4.500" fill="#444"/><path d="M8.500 6h1.500v6.500h-1.500M10 9.200h1.500" fill="none" stroke="#666" stroke-width=".8"/></svg></div><div class="a" style="left:124.0px;top:438.0px;width:1px;height:9px;background:#8d9296"></div><div class="a" style="left:175.5px;top:438.0px;width:1px;height:9px;background:#8d9296"></div><div class="a" style="left:181.0px;top:433.0px;width:7px;height:20px;background:#f4f4f4;border-radius:3px"></div><div class="a" style="left:0;top:455px;width:190px;height:1px;background:#b9bec1"></div><div class="a" style="left:29px;top:456px;width:43px;height:14.500px;background:#e4e7e9;border:1px solid #b4b9bc;border-top:none;border-radius:0 0 2px 2px;font-size:8px;line-height:12px;color:#a0a5a8;text-align:center;white-space:nowrap;overflow:hidden">Navigator</div><div class="a" style="left:1px;top:456px;width:28px;height:17px;background:#d6dadd;border:1px solid #a4a9ac;border-top:none;border-radius:0 0 2px 2px;font-size:8.300px;line-height:18px;color:#222;text-align:center;white-space:nowrap;overflow:hidden;letter-spacing:-.1px">Layer</div></div>
<div id="statusbar" class="a"><span style="left:3.5px;font-size:8.6px;letter-spacing:0.00px">500 * 500 pixel</span><span style="left:66.5px;font-size:8.6px;letter-spacing:0.00px">(3.6 * 3.6cm)</span><span style="left:123.0px;font-size:8.7px;letter-spacing:0.00px">350 dpi</span><span style="left:159.0px;font-size:8.3px;letter-spacing:-0.10px">100 %</span><span style="left:189.0px;font-size:8.3px;letter-spacing:-0.10px">( 627, 511 )</span><span style="left:237.0px;font-size:9.1px;letter-spacing:0.00px">Move Horizontally/Perpendicularly by holding down Shift</span></div>
<div id="taskbar" class="a"><svg class="a" style="left:11.500px;top:9px" width="13" height="13" viewBox="0 0 13 13"><path d="M0 1.800l5.300-.8v5.200H0zM6 .9L13 0v6.200H6zM0 6.900h5.300v5.200L0 11.300zM6 6.900h7V13l-7-1z" fill="#fff"/></svg><svg class="a" style="left:46px;top:8px" width="16" height="16" viewBox="0 0 16 16"><circle cx="10.300" cy="5.200" r="3.700" fill="none" stroke="#fff" stroke-width="1.200"/><path d="M7.600 7.900L2.500 13.500" stroke="#fff" stroke-width="1.300"/></svg><svg class="a" style="left:81px;top:9px" width="18" height="12" viewBox="0 0 18 12" fill="none" stroke="#fff" stroke-width="1"><rect x="4.500" y="1.500" width="9" height="8.500" rx=".5"/><path d="M4.500 3h-2.500a.5.500 0 0 0-.5.500v5a.5.500 0 0 0 .5.500h2.500M13.500 3h2.500a.5.500 0 0 1 .5.500v5a.5.500 0 0 1-.5.500h-2.500"/></svg><svg class="a" style="left:120px;top:8px" width="17" height="14" viewBox="0 0 17 14"><path d="M0 1.500h5.500l1.500 1.500h9.500v10.500h-16.500z" fill="#f4c94c"/><path d="M0 4.500h16.500v9h-16.500z" fill="#fbdb7a"/><path d="M4 8.500h8.500v5h-8.500z" fill="#2a95d6"/><path d="M6.500 11h3.500v2.500h-3.500z" fill="#fbdb7a"/></svg><svg class="a" style="left:156px;top:8px" width="18" height="15" viewBox="0 0 18 15"><g fill="#f3ece2" stroke="#d9cdbf" stroke-width=".5"><rect x=".5" y=".5" width="7" height="7.500" rx="1"/><rect x="10" y=".5" width="7" height="7.500" rx="1"/><rect x="5" y="7" width="8" height="7.500" rx="1"/></g><g fill="#d23a3a"><rect x="2.500" y="2.500" width="3" height="3"/><rect x="12" y="2" width="2" height="4"/><rect x="7.500" y="9" width="3" height="3.500"/></g></svg><svg class="a" style="left:191px;top:5px" width="22" height="20" viewBox="0 0 22 20"><path d="M7.500 1.200h8.500a5 5 0 0 1 5 5v6.500a5 5 0 0 1-5 5h-9.500c-1.200.8-2.600 1-3.600.8.600-.7 1-1.500 1-2.300a5 5 0 0 1-1.400-3.500v-6.500a5 5 0 0 1 5-5z" fill="#fff"/><path d="M4.500 2c-2 1.200-3 3-3 5.200v5.500c0 1.500.5 2.700 1.400 3.600 0 .8-.3 1.500-.9 2.200 1 .2 2.300 0 3.500-.8" fill="none" stroke="#1f6fe5" stroke-width="1.300"/><text x="11.800" y="11.600" font-size="6" font-weight="bold" text-anchor="middle" fill="#2a7af0" font-family="Liberation Sans,sans-serif" letter-spacing="-.3">Zalo</text></svg><svg class="a" style="left:229px;top:5.500px" width="20" height="19" viewBox="0 0 20 19"><ellipse cx="10" cy="9.300" rx="9.300" ry="8.800" fill="#e0202e"/><path d="M13 2.500c3.200 2 3.200 11.600 0 13.600 4-1 6.200-3.800 6.200-6.800s-2.200-5.800-6.200-6.800z" fill="#b3121f"/><ellipse cx="9.800" cy="9.300" rx="3.800" ry="6.300" fill="#6b87b5"/></svg><svg class="a" style="left:266px;top:6px" width="19" height="19" viewBox="0 0 19 19"><ellipse cx="8.500" cy="11" rx="7.800" ry="5.800" transform="rotate(-18 8.500 11)" fill="#e6dcc8" stroke="#9b8f7c" stroke-width=".6"/><circle cx="5" cy="10.500" r="1.500" fill="#3a78d0"/><circle cx="8" cy="8" r="1.400" fill="#e04a3a"/><circle cx="11.500" cy="8" r="1.400" fill="#f0c030"/><circle cx="7.500" cy="13.500" r="1.400" fill="#4aa84a"/><path d="M17.500.5l1 1-6 9.500-2.500 2 .8-3z" fill="#d89a4a"/><path d="M10 13l.8-3 1.700.5z" fill="#555"/></svg><div class="a" style="left:294px;top:0;width:36px;height:30px;background:#8aa0c6"></div><svg class="a" style="left:304px;top:7.500px" width="16" height="15" viewBox="0 0 16 15"><rect width="16" height="15" fill="#fff"/><rect x="1" y="2" width="14" height="4.500" fill="#e0202e"/><path d="M2 3h2v2.500h-2zM5 3h2v2.500h-2zM8 3h2.500v2.500h-2.500zM11.500 3h2.500v2.500h-2.500z" fill="#fff" opacity=".75"/><rect x="2" y="7.500" width="12" height="5.500" fill="#151515"/><path d="M3.500 9h1.500v3h-1.500zM6.500 9h1.500v3h-1.500zM9.500 9h3v1h-3zM10.500 10h1v2h-1z" fill="#fff" opacity=".8"/></svg><div class="a" style="left:186px;top:28px;width:31px;height:2px;background:#c4d1e6"></div><div class="a" style="left:223px;top:28px;width:30px;height:2px;background:#c4d1e6"></div><div class="a" style="left:260px;top:28px;width:27px;height:2px;background:#c4d1e6"></div><div class="a" style="left:294px;top:28px;width:36px;height:2px;background:#c4d1e6"></div><svg class="a" style="left:831px;top:8px" width="13" height="13" viewBox="0 0 13 13" fill="none" stroke="#fff" stroke-width="1"><circle cx="8.500" cy="3.300" r="2.200"/><path d="M5.200 10c0-2 1.300-3.500 3.300-3.500s3.300 1.500 3.300 3.500"/><circle cx="3.500" cy="6.800" r="1.600"/><path d="M.8 12.300c0-1.800 1-3 2.700-3s2.700 1.200 2.700 3"/></svg><svg class="a" style="left:859px;top:11px" width="11" height="7" viewBox="0 0 11 7"><path d="M1 6l4.500-4.800 4.500 4.800" fill="none" stroke="#fff" stroke-width="1.100"/></svg><svg class="a" style="left:875.500px;top:10px" width="13" height="10" viewBox="0 0 13 10"><rect x="3.500" y="2.500" width="9" height="6" fill="none" stroke="#fff" stroke-width="1"/><rect x="5" y="4" width="6" height="3" fill="#fff"/><path d="M.5 1h3v3h-3zM2 4v3h1.500" fill="none" stroke="#fff" stroke-width="1"/></svg><svg class="a" style="left:893.500px;top:9px" width="14" height="12" viewBox="0 0 14 12" fill="none" stroke="#fff" stroke-width="1"><path d="M.7 4.200h2.300l3-2.800v9.200l-3-2.800h-2.300z"/><path d="M8 4.200a2.500 2.500 0 0 1 0 3.600M9.800 2.600a4.800 4.800 0 0 1 0 6.800M11.600 1.200a7 7 0 0 1 0 9.600"/></svg><span class="a" style="left:914px;top:9px;font-size:9px;line-height:11px;color:#fff;letter-spacing:-.75px">ENG</span><span class="a" style="left:943.500px;top:2.500px;font-size:8.700px;line-height:11px;color:#fff;white-space:nowrap">8:04 AM</span><span class="a" style="left:940.500px;top:16px;font-size:8.700px;line-height:11px;color:#fff;white-space:nowrap">8/17/2021</span><svg class="a" style="left:992.500px;top:8.500px" width="13" height="12" viewBox="0 0 13 12"><path d="M.5.500h12v8.500h-3v2.500l-3-2.500h-6z" fill="#fff"/><path d="M2.500 3h8M2.500 5h8M2.500 7h5" stroke="#6b87b5" stroke-width=".6" opacity=".6"/></svg><div class="a" style="left:998.500px;top:14.500px;width:11px;height:11px;border-radius:50%;background:#aeb7c6;border:1px solid #c8cfda;color:#fff;font-size:7.500px;line-height:9px;text-align:center;font-weight:bold">2</div><div class="a" style="left:1019.500px;top:0;width:1px;height:30px;background:#94a8cb"></div></div>
</body>
</html>
